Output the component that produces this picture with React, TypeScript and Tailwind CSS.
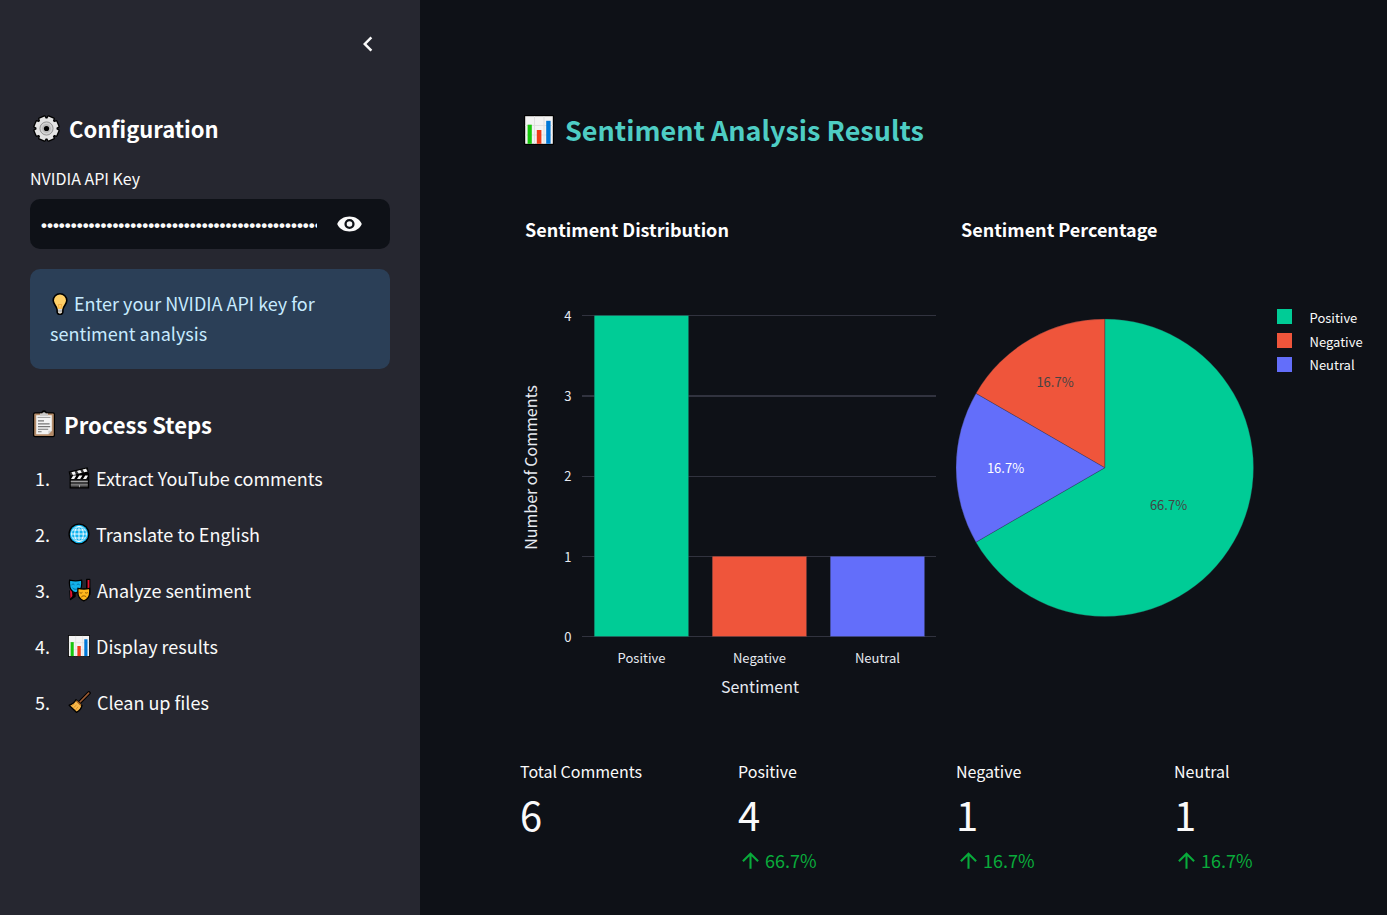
import { useState } from "react";
import type { ReactNode } from "react";

const GREEN = "#00cc96";
const RED = "#ef553b";
const BLUE = "#636efa";

function GearIcon() {
  const teeth = [0, 45, 90, 135, 180, 225, 270, 315];
  return (
    <svg viewBox="0 0 28 28" className="h-7 w-7" aria-hidden="true">
      <g fill="#000" stroke="#000" strokeWidth="2.6" strokeLinejoin="round">
        <circle cx="13.5" cy="14.500" r="10" />
        {teeth.map((a) => (
          <path key={a} d="M10.3 6.5 L10.700 2.700 H16.300 L16.700 6.500 Z" transform={`rotate(${a + 22.5} 13.5 14.5)`} />
        ))}
      </g>
      <g fill="#e3e3e3">
        <circle cx="13.5" cy="14.500" r="10" />
        {teeth.map((a) => (
          <path key={a} d="M10.3 6.5 L10.700 2.700 H16.300 L16.700 6.500 Z" transform={`rotate(${a + 22.5} 13.5 14.5)`} />
        ))}
      </g>
      <circle cx="13.5" cy="14.500" r="6.600" fill="#d2d2d2" stroke="#777" strokeWidth="0.7" />
      <circle cx="13.5" cy="14.500" r="4.400" fill="#b9b9b9" />
      <circle cx="13.5" cy="14.500" r="2.600" fill="#000" />
    </svg>
  );
}

function BulbIcon() {
  return (
    <svg viewBox="0 0 20 24" className="h-6 w-5" aria-hidden="true">
      <path
        d="M10 1.8a6.800 6.800 0 0 0-6.800 6.800c0 3.800 3.600 5.200 3.900 9.200v1.600c0 1.600 1 2.800 2.900 2.800s2.900-1.200 2.900-2.800v-1.600c.3-4 3.900-5.400 3.900-9.200A6.800 6.800 0 0 0 10 1.800z"
        fill="#ffd068"
        stroke="#000"
        strokeWidth="1.6"
      />
      <path d="M8 17h4v2.400c0 1.200-.8 2-2 2s-2-.8-2-2z" fill="#d6d6d6" />
      <path d="M8 19h4" stroke="#888" strokeWidth="0.8" />
      <path d="M8.200 12.500 9.200 16.800M11.800 12.500 10.800 16.800M8.200 12.500h3.600" stroke="#f2a53a" strokeWidth="0.8" fill="none" />
    </svg>
  );
}

function ClipboardIcon() {
  return (
    <svg viewBox="0 0 24 28" className="h-7 w-6" aria-hidden="true">
      <rect x="1" y="2.200" width="22" height="25" rx="2" fill="#000" />
      <circle cx="12" cy="2.800" r="2.600" fill="#000" />
      <rect x="2.200" y="3.400" width="19.600" height="22.600" rx="1" fill="#b28a68" />
      <path d="M4.200 5.200h15.600v15.600l-3.400 3.400H4.200z" fill="#f3f3f3" />
      <path d="M19.800 20.800h-3.400v3.400z" fill="#cfcfcf" />
      <path d="M8 5.800V3.600h2.200a1.900 1.900 0 0 1 3.600 0H16v2.200z" fill="#c9c9c9" />
      <path d="M5.600 7.400h12.800" stroke="#999" strokeWidth="1" />
      <path d="M6 10.900h6M6 13.900h11.600M6 16.600h12.200M6 19.200h10.200M6 21.800h3.600" stroke="#777" strokeWidth="1.1" />
    </svg>
  );
}

function ClapperIcon() {
  return (
    <svg viewBox="0 0 22 22" className="h-[22px] w-[22px]" aria-hidden="true">
      <path d="M.6 4.600 19.600.3l1.200 4.600-1 .8h1.400v15.800H1.600V9z" fill="#000" />
      <path d="M1.800 5.600 18.900 1.600l.8 3-16.900 4z" fill="#333" />
      <path d="m3.400 5.300 3.300-.8 1.200 2.900-3 .7zM9 3.900l3.200-.8 1.600 2.700-3.100.8zM14.600 2.600l3.300-.8 1.600 2.600-3.200.8z" fill="#f4f4f4" />
      <path d="m3 12 2.200-3.600h3.200L6.200 12zM9 12l2.200-3.600h3.200L12.200 12zM15 12l2.200-3.600h2.600v.6L18.200 12z" fill="#f4f4f4" />
      <rect x="2.800" y="12.800" width="17" height="7.400" fill="#3c3c3c" />
      <path d="M2.800 14.500h17M2.800 17.900h17M11.500 17.900v2.300" stroke="#aaa" strokeWidth="0.9" />
    </svg>
  );
}

function GlobeIcon() {
  return (
    <svg viewBox="0 0 22 22" className="h-[22px] w-[22px]" aria-hidden="true">
      <circle cx="11" cy="11" r="10.600" fill="#000" />
      <circle cx="11" cy="11" r="9.200" fill="#0fb5f0" />
      <g fill="none" stroke="#fff" strokeWidth="0.9">
        <ellipse cx="11" cy="11" rx="4.300" ry="7.600" />
        <circle cx="11" cy="11" r="7.600" strokeWidth="0.7" />
        <path d="M11 3.400v15.200M3.400 11h15.200M4.800 7h12.400M4.800 15h12.400" />
      </g>
    </svg>
  );
}

function MasksIcon() {
  return (
    <svg viewBox="0 0 23 24" className="h-6 w-[23px]" aria-hidden="true">
      <path d="M18.700 1.500h3v15l-3 2zM2 13h5v5.500l-4.500 3z" fill="#000" stroke="#000" strokeWidth="1.400" strokeLinejoin="round" />
      <path d="M19.600 2h1.800v11l-1.800-2zM2 11h1.800l.6 7-2 2.500z" fill="#e3122f" />
      <path d="M1.600 2.200c4 .8 8 .8 12 0 .8 7-1 11.400-6 12.800C2.600 13.600.8 9.200 1.600 2.200z" fill="#12b2ec" stroke="#000" strokeWidth="1.300" />
      <path d="M3.600 6.800c1-.9 2-.9 2.800 0M8.800 6.800c1-.9 2-.9 2.800 0M4.600 9.800c1.800 2 4.400 2 6 0" fill="none" stroke="#066c9e" strokeWidth="1" />
      <path d="M10 10.400c4 .8 7.800.8 11.600 0 .8 7-1.200 11.200-5.800 12.400C11.200 21.600 9.200 17.400 10 10.400z" fill="#ffb81c" stroke="#000" strokeWidth="1.300" />
      <path d="M11.600 14.400c1 .9 2 .9 2.800 0M17 14.400c1 .9 2 .9 2.800 0M13 19.400c1.400-2 4.200-2 5.600 0" fill="none" stroke="#8a5500" strokeWidth="1" />
    </svg>
  );
}

function ChartIcon({ className }: { className: string }) {
  return (
    <svg viewBox="0 0 30 30" className={className} aria-hidden="true">
      <rect width="30" height="30" rx="1" fill="#000" />
      <rect x="1.200" y="1.200" width="27.600" height="27.600" fill="#f3f3f3" />
      <path d="M10.500 1.200v27.600M20 1.200v27.600M1.200 10.500h27.600M1.200 20h27.600" stroke="#dedede" strokeWidth="0.9" />
      <rect x="3.600" y="9.700" width="4.200" height="19.100" fill="#16c60c" />
      <rect x="12.800" y="15" width="4.600" height="13.800" fill="#f03a17" />
      <rect x="22.200" y="5.800" width="4.400" height="23" fill="#0078d7" />
    </svg>
  );
}

function BroomIcon() {
  return (
    <svg viewBox="0 0 24 24" className="h-6 w-[23px]" aria-hidden="true">
      <path d="M12.500 12 21.800 2.600" stroke="#000" strokeWidth="4" strokeLinecap="round" />
      <path d="M12.500 12 21.600 2.800" stroke="#9a5b34" strokeWidth="1.700" strokeLinecap="round" />
      <path d="M8.400 9.600 14.600 15.600c-.6 3.400-2.800 5.800-5.800 7.200L1.200 15.400c3.200-.8 5.400-2.600 7.200-5.800z" fill="#f7b84b" stroke="#000" strokeWidth="1.400" strokeLinejoin="round" />
      <path d="m8.600 10.600 5 4.800" stroke="#a86620" strokeWidth="1.500" />
      <path d="m3.600 16.200 3.400-2.400M5.600 18.200l3.200-3M7.800 20.400l2.600-3.400" stroke="#d88a1e" strokeWidth="0.9" />
    </svg>
  );
}

const steps: { icon: ReactNode; text: string }[] = [
  { icon: <ClapperIcon />, text: "Extract YouTube comments" },
  { icon: <GlobeIcon />, text: "Translate to English" },
  { icon: <MasksIcon />, text: "Analyze sentiment" },
  { icon: <ChartIcon className="h-[22px] w-[22px]" />, text: "Display results" },
  { icon: <BroomIcon />, text: "Clean up files" },
];

function Sidebar() {
  const [shown, setShown] = useState(false);
  return (
    <aside className="flex w-[420px] shrink-0 flex-col bg-[#262730] px-[30px] pt-[29px] pb-10">
      <button type="button" aria-label="Collapse sidebar" className="mr-[7px] self-end">
        <svg viewBox="0 0 24 24" className="h-[30px] w-[30px]" fill="#fafafa">
          <path d="M15.410 7.410 14 6l-6 6 6 6 1.410-1.410L10.830 12z" />
        </svg>
      </button>

      <h2 className="mt-[55px] flex items-center gap-2 pl-[3px] text-[22px] leading-7 font-bold text-white">
        <GearIcon />
        Configuration
      </h2>

      <label htmlFor="api-key" className="mt-6 text-base leading-6">
        NVIDIA API Key
      </label>
      <div className="mt-[9px] flex h-[50px] items-center rounded-[10px] bg-[#0e1117] pr-7 pl-[11px]">
        <input
          id="api-key"
          type={shown ? "text" : "password"}
          defaultValue="nvapi-0000000000000000000000000000000000000000000000000000000000000000"
          className="min-w-0 flex-1 bg-transparent pt-1 font-['Liberation_Sans',sans-serif] text-[17px] leading-6 font-bold text-[#fafafa] outline-none"
        />
        <button type="button" aria-label="Show password" onClick={() => setShown(!shown)} className="ml-5">
          <svg viewBox="0 0 25 16" className="h-4 w-[25px]" fill="#fafafa" fillRule="evenodd">
            <path d="M.2 8C2.200 3.200 7 .5 12.500 .5S22.800 3.200 24.800 8C22.800 12.800 18 15.500 12.500 15.500S2.200 12.800 .2 8zM12.500 2.900a5.100 5.100 0 1 0 0 10.200 5.100 5.100 0 0 0 0-10.200zM12.500 5.200a2.800 2.800 0 1 1 0 5.600 2.800 2.800 0 0 1 0-5.600z" />
          </svg>
        </button>
      </div>

      <div className="mt-5 rounded-[10px] bg-[#2b3f57] px-5 pt-[19px] pb-[21px] text-lg leading-[30px] text-[#c7ebff]">
        <span className="mr-1 inline-block h-6 align-[-5px] leading-6">
          <BulbIcon />
        </span>
        Enter your NVIDIA API key for sentiment analysis
      </div>

      <h2 className="mt-10 flex h-[30px] items-center gap-2 pl-[2px] text-[22px] leading-[30px] font-bold text-white">
        <ClipboardIcon />
        Process Steps
      </h2>
      <ol className="mt-6 flex flex-col gap-[26px] pl-[5px] text-lg leading-[30px]">
        {steps.map((step, i) => (
          <li key={step.text} className="flex items-center">
            <span className="w-[33px]">{i + 1}.</span>
            <span className="mr-1.5">{step.icon}</span>
            {step.text}
          </li>
        ))}
      </ol>
    </aside>
  );
}

const bars = [
  { name: "Positive", value: 4, color: GREEN },
  { name: "Negative", value: 1, color: RED },
  { name: "Neutral", value: 1, color: BLUE },
];

function BarChart() {
  const y = (v: number) => 376.5 - v * 80.25;
  return (
    <svg
      viewBox="0 0 416 440"
      className="mt-[17px] w-full overflow-visible"
      role="img"
      aria-label="Number of comments by sentiment"
    >
      {[0, 1, 2, 3, 4].map((v) => (
        <g key={v}>
          <path d={`M62 ${v === 3 ? 136 : Math.floor(y(v)) + 0.5}H416`} stroke="#31333f" strokeWidth={v === 3 ? 2 : 1} />
          <text x="51.500" y={y(v) + 5.3} textAnchor="end" fontSize="13" fill="#e6eaf1">
            {v}
          </text>
        </g>
      ))}
      {bars.map((bar, i) => (
        <g key={bar.name}>
          <rect
            x={74.2 + i * 118}
            y={y(bar.value)}
            width="94.4"
            height={bar.value * 80.25}
            fill={bar.color}
            stroke="#31333f"
            strokeWidth="0.3"
          />
          <text x={121.5 + i * 118} y="403" textAnchor="middle" fontSize="13" fill="#e6eaf1">
            {bar.name}
          </text>
        </g>
      ))}
      <text x="240" y="433" textAnchor="middle" fontSize="16" fill="#e6eaf1">
        Sentiment
      </text>
      <text transform="translate(17 207.500) rotate(-90)" textAnchor="middle" fontSize="16" fill="#e6eaf1">
        Number of Comments
      </text>
    </svg>
  );
}

function PieChart() {
  return (
    <svg viewBox="0 0 416 440" className="mt-[17px] w-full" role="img" aria-label="Sentiment share">
      <g stroke="#31333f" strokeWidth="0.3">
        <path d="M148.750 207.750V59A148.750 148.750 0 1 1 19.930 282.130Z" fill={GREEN} />
        <path d="M148.750 207.750L19.930 133.380A148.750 148.750 0 0 1 148.750 59Z" fill={RED} />
        <path d="M148.750 207.750L19.930 282.130A148.750 148.750 0 0 1 19.930 133.380Z" fill={BLUE} />
      </g>
      <g fontSize="13" textAnchor="middle">
        <text x="212.500" y="250" fill="#444">66.7%</text>
        <text x="99" y="127" fill="#444">16.7%</text>
        <text x="49.500" y="213" fill="#fff">16.7%</text>
      </g>
      {bars.map((bar, i) => (
        <g key={bar.name}>
          <rect x="321" y={49 + i * 24} width="15" height="15" fill={bar.color} />
          <text x="353.500" y={63 + i * 23.5} fontSize="13" fill="#fafafa">
            {bar.name}
          </text>
        </g>
      ))}
    </svg>
  );
}

const metrics = [
  { label: "Total Comments", value: "6", delta: "" },
  { label: "Positive", value: "4", delta: "66.7%" },
  { label: "Negative", value: "1", delta: "16.7%" },
  { label: "Neutral", value: "1", delta: "16.7%" },
];

export default function App() {
  return (
    <div className="flex min-h-screen bg-[#0e1117] font-['Noto_Sans_CJK_SC',sans-serif] text-[#fafafa]">
      <Sidebar />
      <main className="min-w-0 flex-1 pt-[110px] pr-[15px] pb-8 pl-[100px]">
        <h1 className="flex items-center gap-[11px] pl-1 text-[27px] leading-10 font-bold text-[#4ecdc4]">
          <ChartIcon className="h-[30px] w-[30px]" />
          Sentiment Analysis Results
        </h1>

        <div className="mt-[65px] grid grid-cols-2 gap-5">
          <section>
            <h2 className="pl-[5px] text-lg leading-7 font-bold text-white">Sentiment Distribution</h2>
            <BarChart />
          </section>
          <section>
            <h2 className="pl-[5px] text-lg leading-7 font-bold text-white">Sentiment Percentage</h2>
            <PieChart />
          </section>
        </div>

        <dl className="mt-[59px] grid grid-cols-4 gap-5">
          {metrics.map((m) => (
            <div key={m.label}>
              <dt className="text-base leading-6">{m.label}</dt>
              <dd className="mt-1.5 text-[40px] leading-[50px]">{m.value}</dd>
              {m.delta && (
                <dd className="mt-1.5 flex items-center gap-0.5 text-lg leading-[30px] text-[#09ab3b]">
                  <svg viewBox="0 0 24 24" className="h-[25px] w-[25px]" fill="currentColor" aria-hidden="true">
                    <path d="M4 12l1.410 1.410L11 7.830V20h2V7.830l5.580 5.590L20 12l-8-8-8 8z" />
                  </svg>
                  {m.delta}
                </dd>
              )}
            </div>
          ))}
        </dl>
      </main>
    </div>
  );
}
